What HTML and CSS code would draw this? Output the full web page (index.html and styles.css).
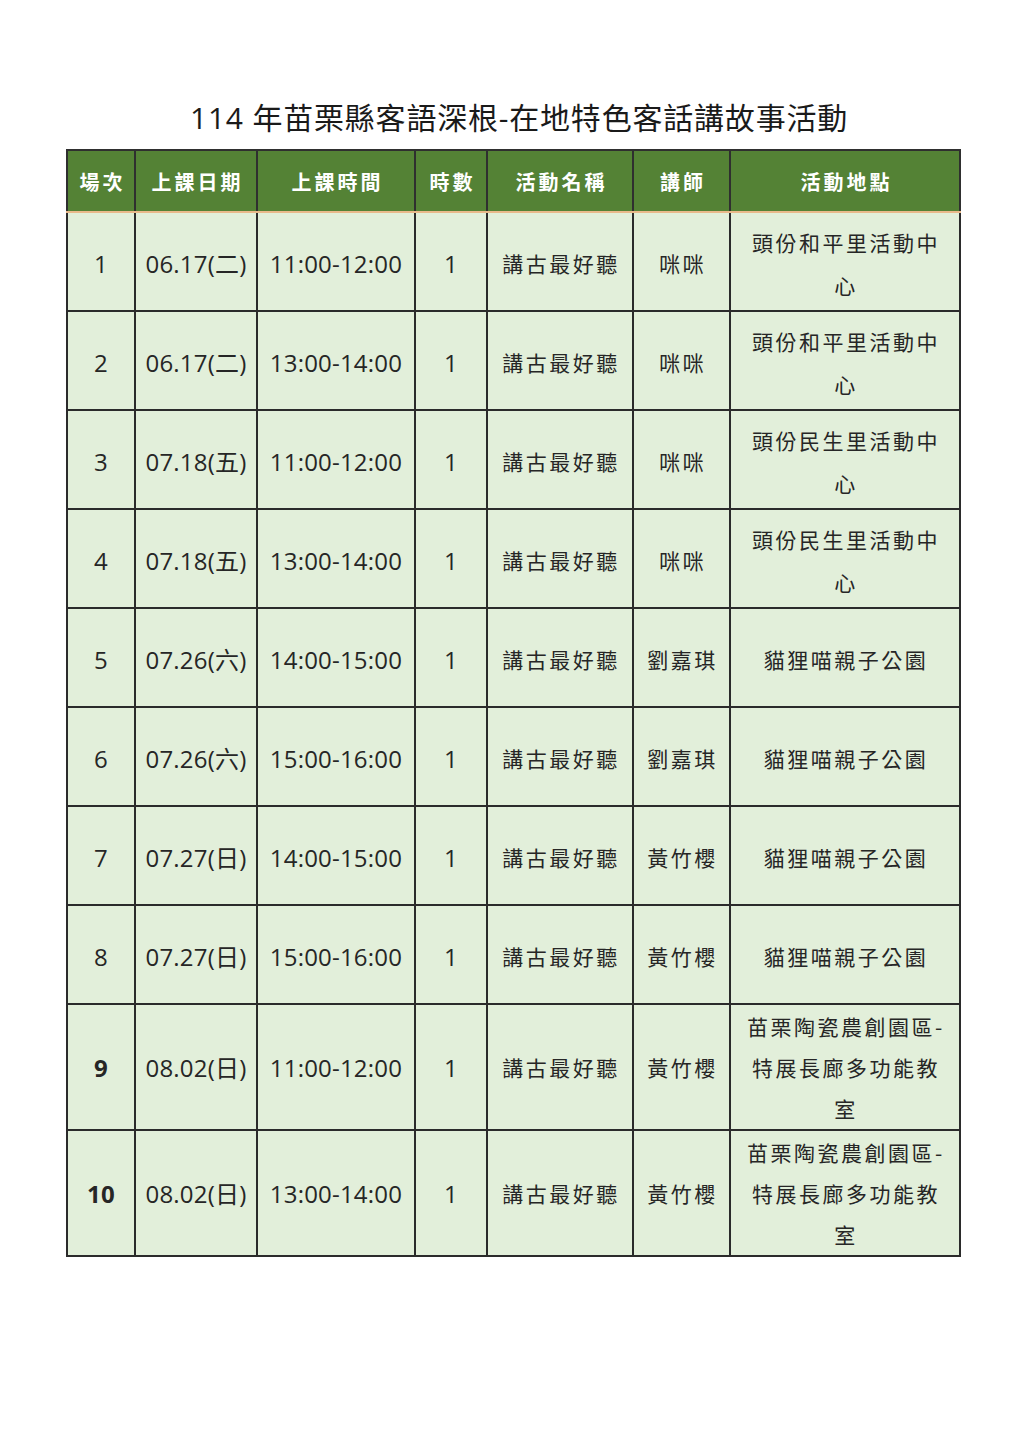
FILE: index.html
```html
<!DOCTYPE html>
<html lang="zh-Hant">
<head>
<meta charset="utf-8">
<title>114 年苗栗縣客語深根-在地特色客話講故事活動</title>
<link rel="stylesheet" href="styles.css">
</head>
<body>
<div class="page">
  <h1 class="title">114 年苗栗縣客語深根-在地特色客話講故事活動</h1>
  <table class="sched">
    <colgroup>
      <col class="c1"><col class="c2"><col class="c3"><col class="c4"><col class="c5"><col class="c6"><col class="c7">
    </colgroup>
    <thead>
      <tr>
        <th>場次</th><th>上課日期</th><th>上課時間</th><th>時數</th><th>活動名稱</th><th>講師</th><th>活動地點</th>
      </tr>
    </thead>
    <tbody>
      <tr><td class="num">1</td><td class="num">06.17(二)</td><td class="num">11:00-12:00</td><td class="num">1</td><td>講古最好聽</td><td>咪咪</td><td class="loc">頭份和平里活動中心</td></tr>
      <tr><td class="num">2</td><td class="num">06.17(二)</td><td class="num">13:00-14:00</td><td class="num">1</td><td>講古最好聽</td><td>咪咪</td><td class="loc">頭份和平里活動中心</td></tr>
      <tr><td class="num">3</td><td class="num">07.18(五)</td><td class="num">11:00-12:00</td><td class="num">1</td><td>講古最好聽</td><td>咪咪</td><td class="loc">頭份民生里活動中心</td></tr>
      <tr><td class="num">4</td><td class="num">07.18(五)</td><td class="num">13:00-14:00</td><td class="num">1</td><td>講古最好聽</td><td>咪咪</td><td class="loc">頭份民生里活動中心</td></tr>
      <tr><td class="num">5</td><td class="num">07.26(六)</td><td class="num">14:00-15:00</td><td class="num">1</td><td>講古最好聽</td><td>劉嘉琪</td><td class="loc">貓狸喵親子公園</td></tr>
      <tr><td class="num">6</td><td class="num">07.26(六)</td><td class="num">15:00-16:00</td><td class="num">1</td><td>講古最好聽</td><td>劉嘉琪</td><td class="loc">貓狸喵親子公園</td></tr>
      <tr><td class="num">7</td><td class="num">07.27(日)</td><td class="num">14:00-15:00</td><td class="num">1</td><td>講古最好聽</td><td>黃竹櫻</td><td class="loc">貓狸喵親子公園</td></tr>
      <tr><td class="num">8</td><td class="num">07.27(日)</td><td class="num">15:00-16:00</td><td class="num">1</td><td>講古最好聽</td><td>黃竹櫻</td><td class="loc">貓狸喵親子公園</td></tr>
      <tr class="tall"><td class="num bold">9</td><td class="num">08.02(日)</td><td class="num">11:00-12:00</td><td class="num">1</td><td>講古最好聽</td><td>黃竹櫻</td><td class="loc">苗栗陶瓷農創園區-特展長廊多功能教室</td></tr>
      <tr class="tall"><td class="num bold">10</td><td class="num">08.02(日)</td><td class="num">13:00-14:00</td><td class="num">1</td><td>講古最好聽</td><td>黃竹櫻</td><td class="loc">苗栗陶瓷農創園區-特展長廊多功能教室</td></tr>
    </tbody>
  </table>
</div>
</body>
</html>
```

FILE: styles.css
```css
html, body {
  margin: 0;
  padding: 0;
  background: #ffffff;
}

body {
  font-family: "Open Sans", "Noto Sans CJK TC", sans-serif;
  color: #222222;
}

.page {
  width: 1018px;
  padding-top: 98px;
}

.title {
  margin: 0 0 11px 0;
  padding-left: 20px;
  text-align: center;
  font-weight: 400;
  font-size: 30px;
  line-height: 40px;
  letter-spacing: 0.8px;
  color: #1a1a1a;
}

.sched {
  margin-left: 66px;
  width: 893px;
  border-collapse: collapse;
  table-layout: fixed;
  background: #e2efda;
}

.c1 { width: 68px; }
.c2 { width: 122px; }
.c3 { width: 158px; }
.c4 { width: 72px; }
.c5 { width: 146px; }
.c6 { width: 97px; }
.c7 { width: 230px; }

.sched th {
  background: #548235;
  color: #ffffff;
  font-family: "Noto Sans CJK TC", sans-serif;
  font-weight: 700;
  font-size: 20px;
  letter-spacing: 3px;
  height: 60px;
  padding: 0 0 0 3px;
  border: 2px solid #2f2f2f;
  border-bottom: 2px solid #e9b98a;
  text-align: center;
  vertical-align: middle;
}

.sched td {
  border: 2px solid #2b2b2b;
  height: 93px;
  padding: 4px 0 0 2px;
  text-align: center;
  vertical-align: middle;
  font-family: "Noto Sans CJK TC", sans-serif;
  font-size: 21px;
  letter-spacing: 2.5px;
  line-height: 43px;
  color: #262626;
}

.sched td.num {
  font-family: "Open Sans", "Noto Sans CJK TC", sans-serif;
  font-size: 24px;
  letter-spacing: 0.2px;
  padding: 4px 0 0 0;
}

.sched td.bold {
  font-weight: 700;
}

.sched td.loc {
  padding: 4px 12px 0 14px;
}

.sched tr.tall td {
  height: 118px;
  line-height: 41px;
  padding-top: 1px;
}
```
